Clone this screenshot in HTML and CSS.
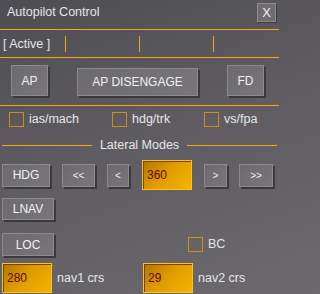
FILE: index.html
```html
<!DOCTYPE html>
<html>
<head>
<meta charset="utf-8">
<link rel="stylesheet" href="styles.css">
</head>
<body>
<div class="win">
  <div class="titlebar">
    <span class="title">Autopilot Control</span>
    <button class="close">X</button>
  </div>
  <div class="status">
    <div class="cell first">[ Active ]</div>
    <div class="cell"><span class="div"></span></div>
    <div class="cell"><span class="div"></span></div>
    <div class="cell"><span class="div"></span></div>
  </div>
  <div class="mainbtns">
    <button class="btn ap">AP</button>
    <button class="btn dis">AP DISENGAGE</button>
    <button class="btn ap">FD</button>
  </div>
  <div class="checks">
    <label class="chk"><span class="box"></span>ias/mach</label>
    <label class="chk"><span class="box"></span>hdg/trk</label>
    <label class="chk"><span class="box"></span>vs/fpa</label>
  </div>
  <div class="header">
    <span class="line"></span>
    <span class="htext">Lateral Modes</span>
    <span class="line"></span>
  </div>
  <div class="hdgrow">
    <button class="btn small hdg">HDG</button>
    <button class="btn small b2">&lt;&lt;</button>
    <button class="btn small b1">&lt;</button>
    <div class="field wide">360</div>
    <button class="btn small b1r">&gt;</button>
    <button class="btn small b2r">&gt;&gt;</button>
  </div>
  <div class="lnavrow">
    <button class="btn small mode">LNAV</button>
  </div>
  <div class="locrow">
    <button class="btn small mode loc">LOC</button>
    <label class="chk bc"><span class="box"></span>BC</label>
  </div>
  <div class="crsrow">
    <div class="crs"><div class="field">280</div><span class="clabel">nav1 crs</span></div>
    <div class="crs"><div class="field">29</div><span class="clabel">nav2 crs</span></div>
  </div>
</div>
</body>
</html>
```

FILE: styles.css
```css
html, body {
  margin: 0;
  padding: 0;
}
body {
  width: 279px;
  height: 294px;
  overflow: hidden;
  background: linear-gradient(160deg, #4e4d52 0%, #5e5c61 45%, #6c6a6f 100%);
  font-family: "Liberation Sans", Arial, sans-serif;
  color: #e6e6e6;
}
.win {
  width: 279px;
  height: 294px;
  display: flex;
  flex-direction: column;
}
.titlebar {
  display: flex;
  align-items: flex-start;
  justify-content: space-between;
  padding: 3px 3px 0 7px;
  box-sizing: border-box;
  border-bottom: 1px solid #f2aa10;
  flex: none;
  height: 30px;
}
.title {
  font-size: 12.5px;
  line-height: 19px;
}
.close {
  width: 19px;
  height: 19px;
  margin: 0;
  padding: 0;
  box-sizing: border-box;
  background: #6e6c71;
  border: 1px solid #8e8c90;
  box-shadow: 1px 1px 0 #3c3b3f;
  color: #f0f0f0;
  font-family: "Liberation Sans", Arial, sans-serif;
  font-size: 13px;
  line-height: 17px;
}
.status {
  height: 28px;
  flex: none;
  box-sizing: border-box;
  border-bottom: 1px solid #f2aa10;
  display: grid;
  grid-template-columns: 65px 74px 74px 1fr;
  align-items: center;
}
.cell {
  display: flex;
  align-items: center;
  font-size: 12.5px;
}
.cell.first {
  padding-left: 3px;
}
.div {
  display: block;
  width: 1px;
  height: 16px;
  background: #f2aa10;
}
.mainbtns {
  height: 48px;
  flex: none;
  box-sizing: border-box;
  border-bottom: 1px solid #f2aa10;
  display: flex;
  align-items: flex-end;
  padding: 0 0 9px 11px;
  gap: 29px;
}
.btn {
  margin: 0;
  padding: 0;
  box-sizing: border-box;
  background: linear-gradient(135deg, #6c6a6f, #78767b);
  border: 1px solid #8c8a8f;
  box-shadow: 2px 2px 0 #3a393d;
  color: #f0f0f0;
  font-family: "Liberation Sans", Arial, sans-serif;
  font-size: 12px;
}
.ap {
  width: 37px;
  height: 31px;
}
.dis {
  width: 121px;
  height: 28px;
}
.checks {
  height: 28px;
  flex: none;
  display: grid;
  grid-template-columns: 103px 92px 1fr;
  padding: 6px 0 0 9px;
  box-sizing: border-box;
  align-items: start;
}
.chk {
  display: flex;
  align-items: center;
  font-size: 12.5px;
  line-height: 15px;
}
.box {
  width: 15px;
  height: 15px;
  box-sizing: border-box;
  border: 1px solid #c8901c;
  margin-right: 5px;
  flex: none;
}
.header {
  height: 22px;
  flex: none;
  display: flex;
  align-items: center;
  gap: 8px;
  padding: 0 2px;
}
.line {
  flex: 1;
  height: 1px;
  background: #f2aa10;
}
.htext {
  font-size: 12.5px;
  line-height: 15px;
}
.hdgrow {
  display: flex;
  align-items: center;
  gap: 12px;
  padding: 4px 0 0 2px;
  height: 34px;
  box-sizing: border-box;
  flex: none;
}
.small {
  height: 23px;
}
.hdg { width: 48px; }
.b2 { width: 33px; font-size: 10px; }
.b1 { width: 22px; font-size: 10px; }
.b1r { width: 23px; font-size: 10px; }
.b2r { width: 34px; font-size: 10px; }
.field {
  width: 50px;
  height: 30px;
  box-sizing: border-box;
  border: 1px solid #ffc21a;
  box-shadow: inset 1px 1px 0 #6e4600;
  background: linear-gradient(135deg, #b27400 0%, #e09a00 45%, #f4b400 100%);
  color: #5a0a00;
  font-size: 12px;
  line-height: 28px;
  padding-left: 4px;
  flex: none;
}
.field.wide {
  margin-left: 1px;
}
.lnavrow {
  margin-top: 8px;
  padding-left: 2px;
  display: flex;
  flex: none;
}
.mode {
  width: 52px;
  height: 22px;
}
.locrow {
  margin-top: 13px;
  padding-left: 2px;
  display: flex;
  align-items: center;
  flex: none;
}
.loc {
  height: 23px;
}
.bc {
  margin-left: 134px;
}
.crsrow {
  margin-top: 7px;
  padding-left: 2px;
  display: grid;
  grid-template-columns: 141px 1fr;
  flex: none;
}
.crs {
  display: flex;
  align-items: center;
  gap: 5px;
}
.clabel {
  font-size: 12.5px;
}
```
